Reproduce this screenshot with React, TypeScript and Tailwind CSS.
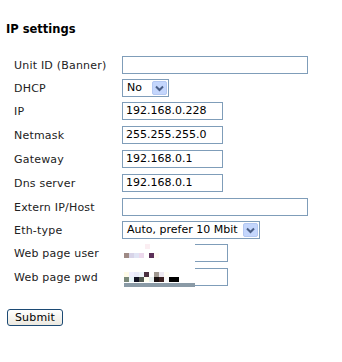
import React from "react";

const font = { fontFamily: '"DejaVu Sans", Verdana, sans-serif' };

function Arrow() {
  return (
    <div className="w-[15px] h-[14px] bg-[#c4d6fc] border border-[#b4c8f2] rounded-[2px] flex items-center justify-center">
      <svg width="9" height="7" viewBox="0 0 9 7">
        <path d="M1 1.5 L4.5 5 L8 1.5" stroke="#4a5e86" strokeWidth="2" fill="none" />
      </svg>
    </div>
  );
}

function Input({ w, value }: { w: string; value?: string }) {
  return (
    <div className={`${w} h-[18px] border border-[#7f9db9] bg-white flex items-center pl-[3px] text-[11px] text-black`}>
      {value}
    </div>
  );
}

function Select({ w, value }: { w: string; value: string }) {
  return (
    <div className={`${w} h-[18px] border border-[#7f9db9] bg-white flex items-center justify-between pl-[4px] pr-[1px] text-[11px] text-black`}>
      <span>{value}</span>
      <Arrow />
    </div>
  );
}

function Row({ label, h, children }: { label: string; h: string; children: React.ReactNode }) {
  return (
    <div className={`flex ${h}`}>
      <div className="w-[122px] pl-[14px] h-[18px] flex items-center pt-[2px] text-[11px] tracking-[0.2px] text-[#222]">{label}</div>
      <div>{children}</div>
    </div>
  );
}

function Px({ c }: { c: string }) {
  return <div className="w-[5px] h-[5px]" style={{ background: c }} />;
}

export default function App() {
  return (
    <div className="w-[342px] h-[362px] bg-white relative" style={font}>
      <div className="pt-[21px] pl-[6px] text-[11.5px] font-bold text-black leading-[16px]">IP settings</div>
      <div className="mt-[19px]">
        <Row label="Unit ID (Banner)" h="h-[23px]"><Input w="w-[186px]" /></Row>
        <Row label="DHCP" h="h-[23px]"><Select w="w-[47px]" value="No" /></Row>
        <Row label="IP" h="h-[24px]"><Input w="w-[101px]" value="192.168.0.228" /></Row>
        <Row label="Netmask" h="h-[24px]"><Input w="w-[101px]" value="255.255.255.0" /></Row>
        <Row label="Gateway" h="h-[24px]"><Input w="w-[101px]" value="192.168.0.1" /></Row>
        <Row label="Dns server" h="h-[24px]"><Input w="w-[101px]" value="192.168.0.1" /></Row>
        <Row label="Extern IP/Host" h="h-[23px]"><Input w="w-[186px]" /></Row>
        <Row label="Eth-type" h="h-[23px]"><Select w="w-[138px]" value="Auto, prefer 10 Mbit" /></Row>
        <Row label="Web page user" h="h-[24px]">
          <div className="relative">
            <Input w="w-[106px]" />
            <div className="absolute left-0 top-0 w-[73px] h-[18px] bg-white">
              <div className="absolute left-[23px] top-0 w-[5px] h-[5px] bg-[#fbeef2]" />
              <div className="absolute left-[2px] top-[9px] flex">
                <Px c="#9e8a85" /><Px c="#d8d4e8" /><Px c="#e0e4f4" /><Px c="#ecd8ec" /><Px c="#ffffff" /><Px c="#5c3058" /><Px c="#fffbf4" />
              </div>
            </div>
          </div>
        </Row>
        <Row label="Web page pwd" h="h-[24px]">
          <div className="relative">
            <Input w="w-[106px]" />
            <div className="absolute left-0 top-0 w-[73px] h-[20px] bg-white">
              <div className="absolute left-[2px] top-[4px] flex">
                <Px c="#fffbe8" /><Px c="#f0f0ff" /><Px c="#e8eaf8" /><Px c="#eef4fa" /><Px c="#4a3040" /><Px c="#ffffff" /><Px c="#a09890" /><Px c="#ece8f0" /><Px c="#fffdf4" />
              </div>
              <div className="absolute left-[2px] top-[9px] flex">
                <Px c="#7a8878" /><Px c="#e8f4f8" /><Px c="#101020" /><Px c="#505850" /><Px c="#fffff0" /><Px c="#e8f0f0" /><Px c="#1a1010" /><Px c="#3a2020" /><Px c="#f8f8f8" /><Px c="#000000" /><Px c="#000000" />
              </div>
              <div className="absolute left-[2px] top-[15px] w-[71px] h-[4px] bg-[#8a9aa6]" />
            </div>
          </div>
        </Row>
      </div>
      <div className="mt-[17px] ml-[7px]">
        <button className="w-[56px] h-[17px] border border-[#1c4a74] rounded-[3px] bg-gradient-to-b from-white to-[#ece9e0] text-[11px] tracking-[0.2px] text-black flex items-center justify-center leading-none" style={font}>
          Submit
        </button>
      </div>
    </div>
  );
}
